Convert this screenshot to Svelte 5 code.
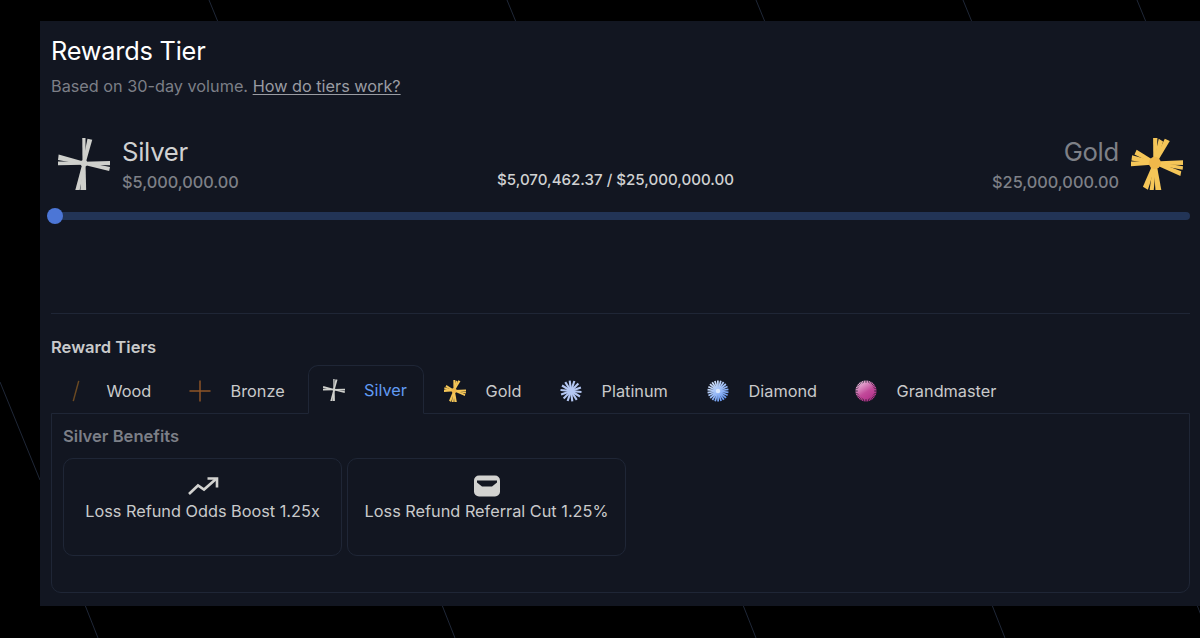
<script>
  const tabs = [
    { name: 'Wood', w: 124, pad: 14 },
    { name: 'Bronze', w: 133, pad: 14 },
    { name: 'Silver', w: 116, pad: 14, active: true },
    { name: 'Gold', w: 122, pad: 20 },
    { name: 'Platinum', w: 147, pad: 14 },
    { name: 'Diamond', w: 148, pad: 14 },
    { name: 'Grandmaster', w: 176, pad: 14 }
  ];
  function rays(n, inner, outer, offset = 0) {
    return Array.from({ length: n }, (_, i) => {
      const a = (i * 2 * Math.PI) / n + offset;
      return {
        x1: (12 + inner * Math.cos(a)).toFixed(2),
        y1: (12 + inner * Math.sin(a)).toFixed(2),
        x2: (12 + outer * Math.cos(a)).toFixed(2),
        y2: (12 + outer * Math.sin(a)).toFixed(2)
      };
    });
  }
  const silverC = [12, 11.7];
  const silverW = [
    [11.2, 0, 12.7, 0], [13.6, 0.4, 15.8, 0.8],
    [24, 10.6, 24, 12.6], [24, 13.4, 23.6, 15.2],
    [10.3, 24, 13, 24], [8, 24, 10, 24],
    [0, 10.8, 0, 12.6], [0.3, 7.6, 0, 10.2]
  ];
  const goldC = [11, 11.5];
  const goldW = [
    [10.2, 0, 12.2, 0], [12.8, 0.4, 14.8, 1.6], [15.6, 0.4, 17.9, 1.4],
    [24, 10.3, 24, 12.5], [24, 13, 23.8, 14.6], [23.2, 15.3, 22.8, 17.5],
    [5.5, 22.5, 7.8, 23.9], [8.6, 24, 10.5, 24], [11.3, 24, 14, 24],
    [0, 10.9, 0, 13], [0.5, 8, 0.2, 10.4], [2.6, 5.4, 1.6, 7.6]
  ];
  function wedges(list, c, hw) {
    return list.map(([a, b, d, e]) => {
      const mx = (a + d) / 2 - c[0], my = (b + e) / 2 - c[1];
      const len = Math.hypot(mx, my);
      let px = (-my / len) * hw, py = (mx / len) * hw;
      // keep the base points in the same order as the outer edge, so the shape never crosses itself
      if ((d - a) * px + (e - b) * py < 0) { px = -px; py = -py; }
      return `${a},${b} ${d},${e} ${c[0] + px},${c[1] + py} ${c[0] - px},${c[1] - py}`;
    });
  }
  const silverPolys = wedges(silverW, silverC, 0.7);
  const goldPolys = wedges(goldW, goldC, 0.7);
</script>

{#snippet silverIcon(cls)}
  <svg class={cls} viewBox="0 0 24 24">
    {#each silverPolys as p}<polygon points={p} fill="#cfd0cc" />{/each}
    <circle cx="12" cy="11.7" r="1.6" fill="#cfd0cc" />
  </svg>
{/snippet}
{#snippet goldIcon(cls)}
  <svg class={cls} viewBox="0 0 24 24">
    {#each goldPolys as p}<polygon points={p} fill="#f5c658" />{/each}
    <circle cx="11" cy="11.5" r="2.8" fill="#f0b84a" />
  </svg>
{/snippet}
{#snippet tabIcon(name)}
  {#if name === 'Wood'}
    <svg class="tab-icon" viewBox="0 0 24 24"><line x1="15" y1="1" x2="9" y2="23" stroke="#6b4a22" stroke-width="1.6" /></svg>
  {:else if name === 'Bronze'}
    <svg class="tab-icon" viewBox="0 0 24 24"><path d="M0.5 12H23.5M12 0.5V23.5" stroke="#8f5527" stroke-width="1.6" /></svg>
  {:else if name === 'Silver'}
    {@render silverIcon('tab-icon')}
  {:else if name === 'Gold'}
    {@render goldIcon('tab-icon')}
  {:else if name === 'Platinum'}
    <svg class="tab-icon" viewBox="0 0 24 24">
      {#each rays(14, 0, 11.5, 0.1) as r}
        <line x1={r.x1} y1={r.y1} x2={r.x2} y2={r.y2} stroke="#b4c7f3" stroke-width="2.3" />
      {/each}
    </svg>
  {:else if name === 'Diamond'}
    <svg class="tab-icon" viewBox="0 0 24 24">
      <defs>
        <linearGradient id="dia" gradientUnits="userSpaceOnUse" x1="4" y1="2" x2="20" y2="22">
          <stop offset="0" stop-color="#dbe8fc" /><stop offset="1" stop-color="#5f93f2" />
        </linearGradient>
      </defs>
      {#each rays(22, 0, 11.5, 0.13) as r}
        <line x1={r.x1} y1={r.y1} x2={r.x2} y2={r.y2} stroke="url(#dia)" stroke-width="1.9" />
      {/each}
      <circle cx="12" cy="12" r="2.5" fill="#d8e6fc" />
    </svg>
  {:else}
    <svg class="tab-icon" viewBox="0 0 24 24">
      <defs>
        <linearGradient id="gm" gradientUnits="userSpaceOnUse" x1="5" y1="1" x2="19" y2="23">
          <stop offset="0" stop-color="#efc4e2" /><stop offset="0.55" stop-color="#c24a9a" /><stop offset="1" stop-color="#b02c86" />
        </linearGradient>
      </defs>
      <circle cx="12" cy="12" r="9" fill="url(#gm)" />
      {#each rays(36, 7, 11.5) as r}
        <line x1={r.x1} y1={r.y1} x2={r.x2} y2={r.y2} stroke="url(#gm)" stroke-width="1.3" />
      {/each}
    </svg>
  {/if}
{/snippet}

<div class="page">
  <svg class="bg" viewBox="0 0 1200 638" aria-hidden="true">
    <path d="M209 0L218 22M507 0L516 22M756 0L765 22M963 0L972 22M1137 0L1146 22M85 605L98 638M442 605L455 638M743 605L756 638M992 605L1005 638M1197 605L1210 638M0 382L40 480" stroke="#1f2737" stroke-width="1" fill="none" />
  </svg>
  <section class="panel">
    <h1>Rewards Tier</h1>
    <p class="sub">Based on 30-day volume. <a href="#tiers">How do tiers work?</a></p>

    <div class="progress-head">
      <div class="tier">
        {@render silverIcon('big-icon')}
        <div class="tier-text">
          <div class="tier-name">Silver</div>
          <div class="tier-amt">$5,000,000.00</div>
        </div>
      </div>
      <div class="volume">$5,070,462.37 / $25,000,000.00</div>
      <div class="tier next">
        <div class="tier-text">
          <div class="tier-name">Gold</div>
          <div class="tier-amt">$25,000,000.00</div>
        </div>
        {@render goldIcon('big-icon')}
      </div>
    </div>

    <div class="track"><span class="knob"></span></div>

    <hr />

    <h2>Reward Tiers</h2>
    <div class="tabs">
      {#each tabs as t}
        <div class="tab" class:active={t.active} style="width:{t.w}px;padding-left:{t.pad}px">
          {@render tabIcon(t.name)}
          <span>{t.name}</span>
        </div>
      {/each}
    </div>
    <div class="content">
      <h3>Silver Benefits</h3>
      <div class="cards">
        <div class="card">
          <svg class="card-icon" viewBox="0 0 32 22" fill="none" stroke="#d2d2d0" stroke-width="2.6">
            <path d="M2 19L11 10.5L17 14.5L29 4" />
            <path d="M20.5 3.5H30V12.5" />
          </svg>
          <span>Loss Refund Odds Boost 1.25x</span>
        </div>
        <div class="card">
          <svg class="card-icon" viewBox="0 0 32 22">
            <rect x="3" y="0.5" width="26" height="21" rx="5" fill="#d2d2d0" />
            <path d="M6 5.5H26V7.5L21 11.5H11L6 7.5Z" fill="#121621" />
          </svg>
          <span>Loss Refund Referral Cut 1.25%</span>
        </div>
      </div>
    </div>
  </section>
</div>

<style>
  :global(body) { margin: 0; background: #000; }
  .page {
    position: relative;
    width: 1200px;
    height: 638px;
    overflow: hidden;
    background: #000;
    padding: 21px 0 0 40px;
    box-sizing: border-box;
    font-family: Inter, "Liberation Sans", sans-serif;
  }
  .bg { position: absolute; inset: 0; width: 1200px; height: 638px; }
  .panel {
    position: relative;
    width: 1160px;
    height: 585px;
    box-sizing: border-box;
    background: #121621;
    padding: 15px 10px 0 11px;
  }
  h1 { margin: 0; font-size: 25.3px; line-height: 30px; font-weight: 400; color: #fff; letter-spacing: -0.2px; }
  .sub { margin: 10px 0 0; font-size: 16.25px; line-height: 20px; color: #7c7f87; }
  .sub a { color: #9a9ca3; text-decoration: underline; text-underline-offset: 2px; }
  .progress-head {
    display: flex;
    justify-content: space-between;
    align-items: center;
    margin-top: 40px;
    height: 56px;
    padding: 0 7px;
  }
  .tier { display: flex; align-items: center; gap: 12px; }
  .big-icon { width: 52px; height: 52px; display: block; align-self: flex-start; margin-top: 1px; }
  .tier-name { font-size: 25.7px; line-height: 30px; color: #d0d1d2; letter-spacing: -0.3px; }
  .tier-amt { font-size: 16.3px; line-height: 20px; font-weight: 500; color: #7e8087; margin-top: 5px; }
  .next { text-align: right; }
  .next .tier-name { color: #7e8087; }
  .volume { font-size: 15.1px; font-weight: 500; color: #d0d1d2; padding-top: 30px; }
  .track {
    position: relative;
    margin-top: 20px;
    height: 8px;
    border-radius: 4px;
    background: #223456;
  }
  .knob {
    position: absolute;
    left: -4px;
    top: -4px;
    width: 16px;
    height: 16px;
    border-radius: 50%;
    background: #4c76d6;
  }
  hr { border: 0; border-top: 1px solid #1f2636; margin: 93px 0 0 0; }
  h2 { margin: 23px 0 0; font-size: 16.6px; line-height: 20px; font-weight: 600; color: #c9cacb; }
  .tabs { display: flex; margin-top: 8px; height: 49px; position: relative; z-index: 1; }
  .tab {
    box-sizing: border-box;
    display: flex;
    align-items: center;
    gap: 19.6px;
    padding-top: 2px;
    font-size: 16.3px;
    color: #c9cacb;
    border-radius: 10px 10px 0 0;
  }
  .tab.active {
    background: #121621;
    border: 1px solid #1f2636;
    border-bottom: 1px solid #121621;
    color: #619bf3;
    padding-top: 1px;
    gap: 19px;
  }
  .tab-icon { width: 22px; height: 22px; display: block; flex: none; }
  .content {
    position: relative;
    box-sizing: border-box;
    height: 180px;
    margin-top: -1px;
    border: 1px solid #1f2636;
    border-radius: 0 0 10px 10px;
    padding: 12px 11px 0;
  }
  h3 { margin: 0; font-size: 16.6px; line-height: 20px; font-weight: 600; color: #7c7f87; }
  .cards { display: flex; gap: 5px; margin-top: 12px; }
  .card {
    box-sizing: border-box;
    width: 279px;
    height: 98px;
    border: 1px solid #1f2636;
    border-radius: 10px;
    display: flex;
    flex-direction: column;
    align-items: center;
    padding-top: 16px;
    gap: 4px;
    font-size: 16.3px;
    line-height: 20px;
    color: #c9cacb;
  }
  .card-icon { width: 32px; height: 22px; display: block; }
</style>
